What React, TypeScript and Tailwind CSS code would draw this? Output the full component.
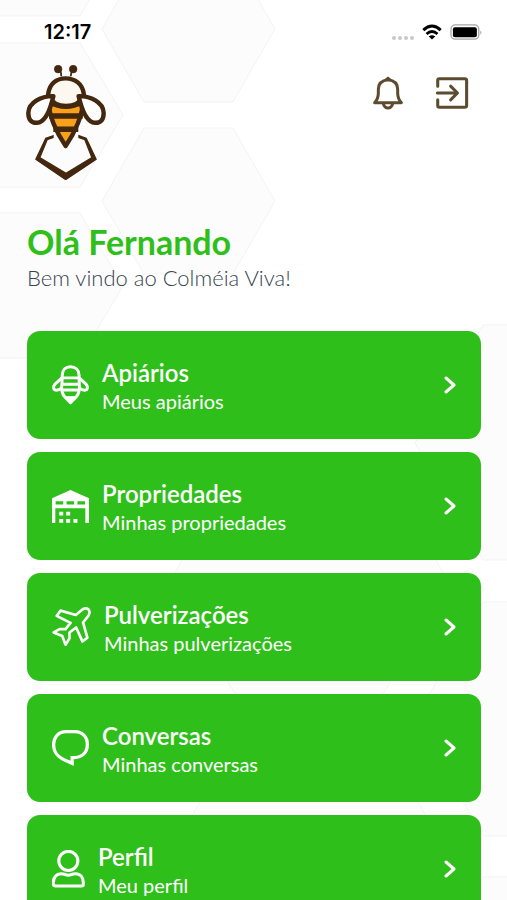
import React from 'react';

interface IconProps {
  className?: string;
}

const LogoIcon: React.FC<IconProps> = ({ className }) => (
  <svg viewBox="36 30 234 340" className={className} fill="none" stroke="#43270f" aria-hidden="true">
    <path d="M121 46Q140 42 139 66M184 46Q168 44 167 66" strokeWidth="5" />
    <circle cx="130" cy="45" r="11" fill="#43270f" strokeWidth="2" />
    <circle cx="174" cy="45" r="11" fill="#43270f" strokeWidth="2" />
    <path d="M101 124V118C104 88 125 72 152 72S202 88 205 118V124Q190 153 153 153Q118 153 101 124Z" fill="#fdf8ef" strokeWidth="13" />
    <path d="M104 142Q152 168 202 142C203 175 179 232 152 270C126 232 101 180 104 142Z" fill="#f9a11b" strokeWidth="13" strokeLinejoin="round" />
    <path d="M104 182H202M116 221H189" strokeWidth="16" />
    <path d="M116 124C82 123 44 142 43 172C42 193 52 203 68 202C91 200 106 168 116 124Z" fill="#fdfdfd" strokeWidth="13" strokeLinejoin="round" />
    <path d="M190 124C224 123 262 142 263 172C264 193 254 203 238 202C215 200 200 168 190 124Z" fill="#fdfdfd" strokeWidth="13" strokeLinejoin="round" />
    <path d="M115 240L94 247L65 309L152 368L241 309L212 247L191 240L191 245L208 251L229 304L153 350L76 304L98 251L115 245Z" fill="#43270f" strokeWidth="4" />
  </svg>
);

const BellIcon: React.FC<IconProps> = ({ className }) => (
  <svg viewBox="72 230 90 102" className={className} fill="none" stroke="#5d4b2f" strokeWidth="9" strokeLinejoin="round" aria-hidden="true">
    <path d="M77 310Q88 298 88 281V270Q88 244 117 241Q146 244 146 270V281Q146 298 157 310Z" />
    <path d="M103 313Q106 326 117 326T131 313" />
    <path d="M108 241L117 234L126 241Z" strokeWidth="4" fill="#5d4b2f" />
  </svg>
);

const ExitIcon: React.FC<IconProps> = ({ className }) => (
  <svg viewBox="258 230 100 100" className={className} fill="none" stroke="#5d4b2f" strokeWidth="9" strokeLinecap="round" strokeLinejoin="round" aria-hidden="true">
    <path d="M266 260V243Q266 238 271 238H345Q351 238 351 243V317Q351 322 345 322H271Q266 322 266 317V300" />
    <path d="M265 280H322M304 260L324 280L304 300" />
  </svg>
);

const WifiIcon: React.FC<IconProps> = ({ className }) => (
  <svg viewBox="218 70 62 49" className={className} fill="none" stroke="#000" strokeWidth="9" aria-hidden="true">
    <path d="M222 89Q249 64 276 89" />
    <path d="M232 101Q249 86 266 101" />
    <path d="M239 109Q249 101 259 109L249 118Z" fill="#000" stroke="none" />
  </svg>
);

const BatteryIcon: React.FC<IconProps> = ({ className }) => (
  <svg viewBox="300 70 102 50" className={className} aria-hidden="true">
    <rect x="303" y="73" width="86" height="44" rx="13" fill="#fff" stroke="#a6a6a6" strokeWidth="4" />
    <rect x="309" y="80" width="74" height="31" rx="6" fill="#000" />
    <path d="M394 90Q400 96 394 103Z" fill="#8c8c8c" />
  </svg>
);

const BeeIcon: React.FC<IconProps> = ({ className }) => (
  <svg viewBox="23 28 112 120" className={className} fill="none" stroke="currentColor" strokeWidth="9" strokeLinejoin="round" aria-hidden="true">
    <path d="M54 68V59C54 43 64 33 79 33S105 43 105 59V68" />
    <path d="M50 67H108M56 86H102M52 104H106" />
    <path d="M54 67L52 100Q54 118 64 127L79 142L94 127Q104 118 106 100L105 67" />
    <path d="M52 68L32 86Q24 97 31 103Q39 108 53 97M106 68L126 86Q134 97 127 103Q119 108 105 97" />
    <path d="M62 124H96L79 142Z" fill="currentColor" strokeWidth="3" />
  </svg>
);

const WarehouseIcon: React.FC<IconProps> = ({ className }) => (
  <svg viewBox="98 116 112 100" className={className} fill="currentColor" aria-hidden="true">
    <path fillRule="evenodd" d="M98 141L154 116L210 141V216H199V171H108V216H98ZM109 150V160H132V150ZM142 150V160H165V150ZM175 150V160H198V150Z" />
    <path d="M120 182H132V193H120ZM141 182H153V193H141ZM120 204H132V215H120ZM141 204H153V215H141ZM163 204H175V215H163Z" />
  </svg>
);

const PlaneIcon: React.FC<IconProps> = ({ className }) => (
  <svg viewBox="98 110 118 120" className={className} fill="none" stroke="currentColor" strokeWidth="8" strokeLinejoin="round" aria-hidden="true">
    <path d="M112 137L124 121L170 134L188 119Q200 110 208 117Q215 125 208 137L192 157L205 203L190 214L171 172L151 187V205L139 224L129 198L103 187L121 177H139L154 158Z" />
  </svg>
);

const ChatIcon: React.FC<IconProps> = ({ className }) => (
  <svg viewBox="97 119 112 110" className={className} fill="none" stroke="currentColor" strokeWidth="10" aria-hidden="true">
    <path d="M140 124H166C188 124 204 139 204 162C204 187 189 203 158 203V220L142 213C116 203 102 190 102 164C102 140 117 124 140 124Z" />
  </svg>
);

const PersonIcon: React.FC<IconProps> = ({ className }) => (
  <svg viewBox="98 152 97 112" className={className} fill="none" stroke="currentColor" strokeWidth="9" strokeLinejoin="round" aria-hidden="true">
    <circle cx="146" cy="184" r="28" />
    <path d="M125 222C135 222 138 226 146 226S157 222 167 222C182 222 190 233 190 247V253Q190 258 185 258H108Q102 258 102 253V247C102 233 111 222 125 222Z" />
  </svg>
);

const ChevronIcon: React.FC<IconProps> = ({ className }) => (
  <svg viewBox="0 0 12 18" className={className} fill="none" stroke="currentColor" strokeWidth="3" strokeLinecap="round" strokeLinejoin="round" aria-hidden="true">
    <path d="M2 2L10 9L2 16" />
  </svg>
);

const Honeycomb: React.FC = () => (
  <svg className="absolute left-0 top-0 -z-10" width="507" height="900" fill="#fcfcfc" stroke="#f3f3f3" aria-hidden="true">
    <path d="M102 29L144 -44H233L275 29L233 102H144Z" />
    <path d="M102 201L144 128H233L275 201L233 274H144Z" />
    <path d="M-10 16H80L123 -57H-10Z" />
    <path d="M-10 43H80L123 115L80 187H-10Z" />
    <path d="M-10 213H80L123 286L80 358H-10Z" />
    <path d="M415 443L483 325H620V560H483Z" />
    <path d="M415 719L483 602H620V836H483Z" />
    <path d="M415 994L483 877H620V994Z" />
    <path d="M170 581L239 461H379L448 581L379 701H239Z" />
    <path d="M170 854L239 734H379L448 854L379 974H239Z" />
  </svg>
);

const MENU = [
  { title: 'Apiários', subtitle: 'Meus apiários', Icon: BeeIcon, size: 'w-[37px]' },
  { title: 'Propriedades', subtitle: 'Minhas propriedades', Icon: WarehouseIcon, size: 'w-[37px]' },
  { title: 'Pulverizações', subtitle: 'Minhas pulverizações', Icon: PlaneIcon, size: 'w-[39px]' },
  { title: 'Conversas', subtitle: 'Minhas conversas', Icon: ChatIcon, size: 'w-[37px]' },
  { title: 'Perfil', subtitle: 'Meu perfil', Icon: PersonIcon, size: 'w-[33px]' },
];

const StatusBar: React.FC = () => (
  <div className="flex h-16 items-center justify-between pr-6 pl-11">
    <span className="font-['Inter',sans-serif] text-xl font-semibold text-black">12:17</span>
    <div className="flex items-center gap-2">
      <div className="flex gap-[2px] pt-3">
        {[0, 1, 2, 3].map((dot) => (
          <span key={dot} className="size-1 rounded-full bg-[#c8c8c8]" />
        ))}
      </div>
      <WifiIcon className="w-5" />
      <BatteryIcon className="w-[33px]" />
    </div>
  </div>
);

export default function App() {
  return (
    <div className="relative isolate h-screen overflow-x-hidden overflow-y-auto bg-white font-['Lato',sans-serif] [scrollbar-width:none]">
      <Honeycomb />
      <StatusBar />

      <header className="flex items-start justify-between pr-[38px] pl-[26px]">
        <LogoIcon className="w-20" />
        <div className="flex items-center gap-8 pt-3">
          <button type="button" aria-label="Notificações">
            <BellIcon className="w-[30px]" />
          </button>
          <button type="button" aria-label="Sair">
            <ExitIcon className="w-[34px]" />
          </button>
        </div>
      </header>

      <main className="pr-[26px] pb-6 pl-[27px]">
        <section className="pt-[42px]">
          <h1 className="text-[34px] leading-10 font-bold text-[#2fbf1a]">Olá Fernando</h1>
          <p className="text-[22px] leading-8 font-light text-[#36454f]">Bem vindo ao Colméia Viva!</p>
        </section>

        <nav className="mt-[37px] flex flex-col gap-[13px]">
          {MENU.map(({ title, subtitle, Icon, size }) => (
            <button
              key={title}
              type="button"
              className="flex h-[108px] w-full items-center gap-[13px] rounded-[13px] bg-[#2fbf1a] px-[25px] text-left text-white"
            >
              <Icon className={size} />
              <span className="flex flex-1 flex-col pt-1">
                <span className="text-2xl leading-7 font-semibold">{title}</span>
                <span className="text-xl leading-7">{subtitle}</span>
              </span>
              <ChevronIcon className="w-3" />
            </button>
          ))}
        </nav>
      </main>
    </div>
  );
}
